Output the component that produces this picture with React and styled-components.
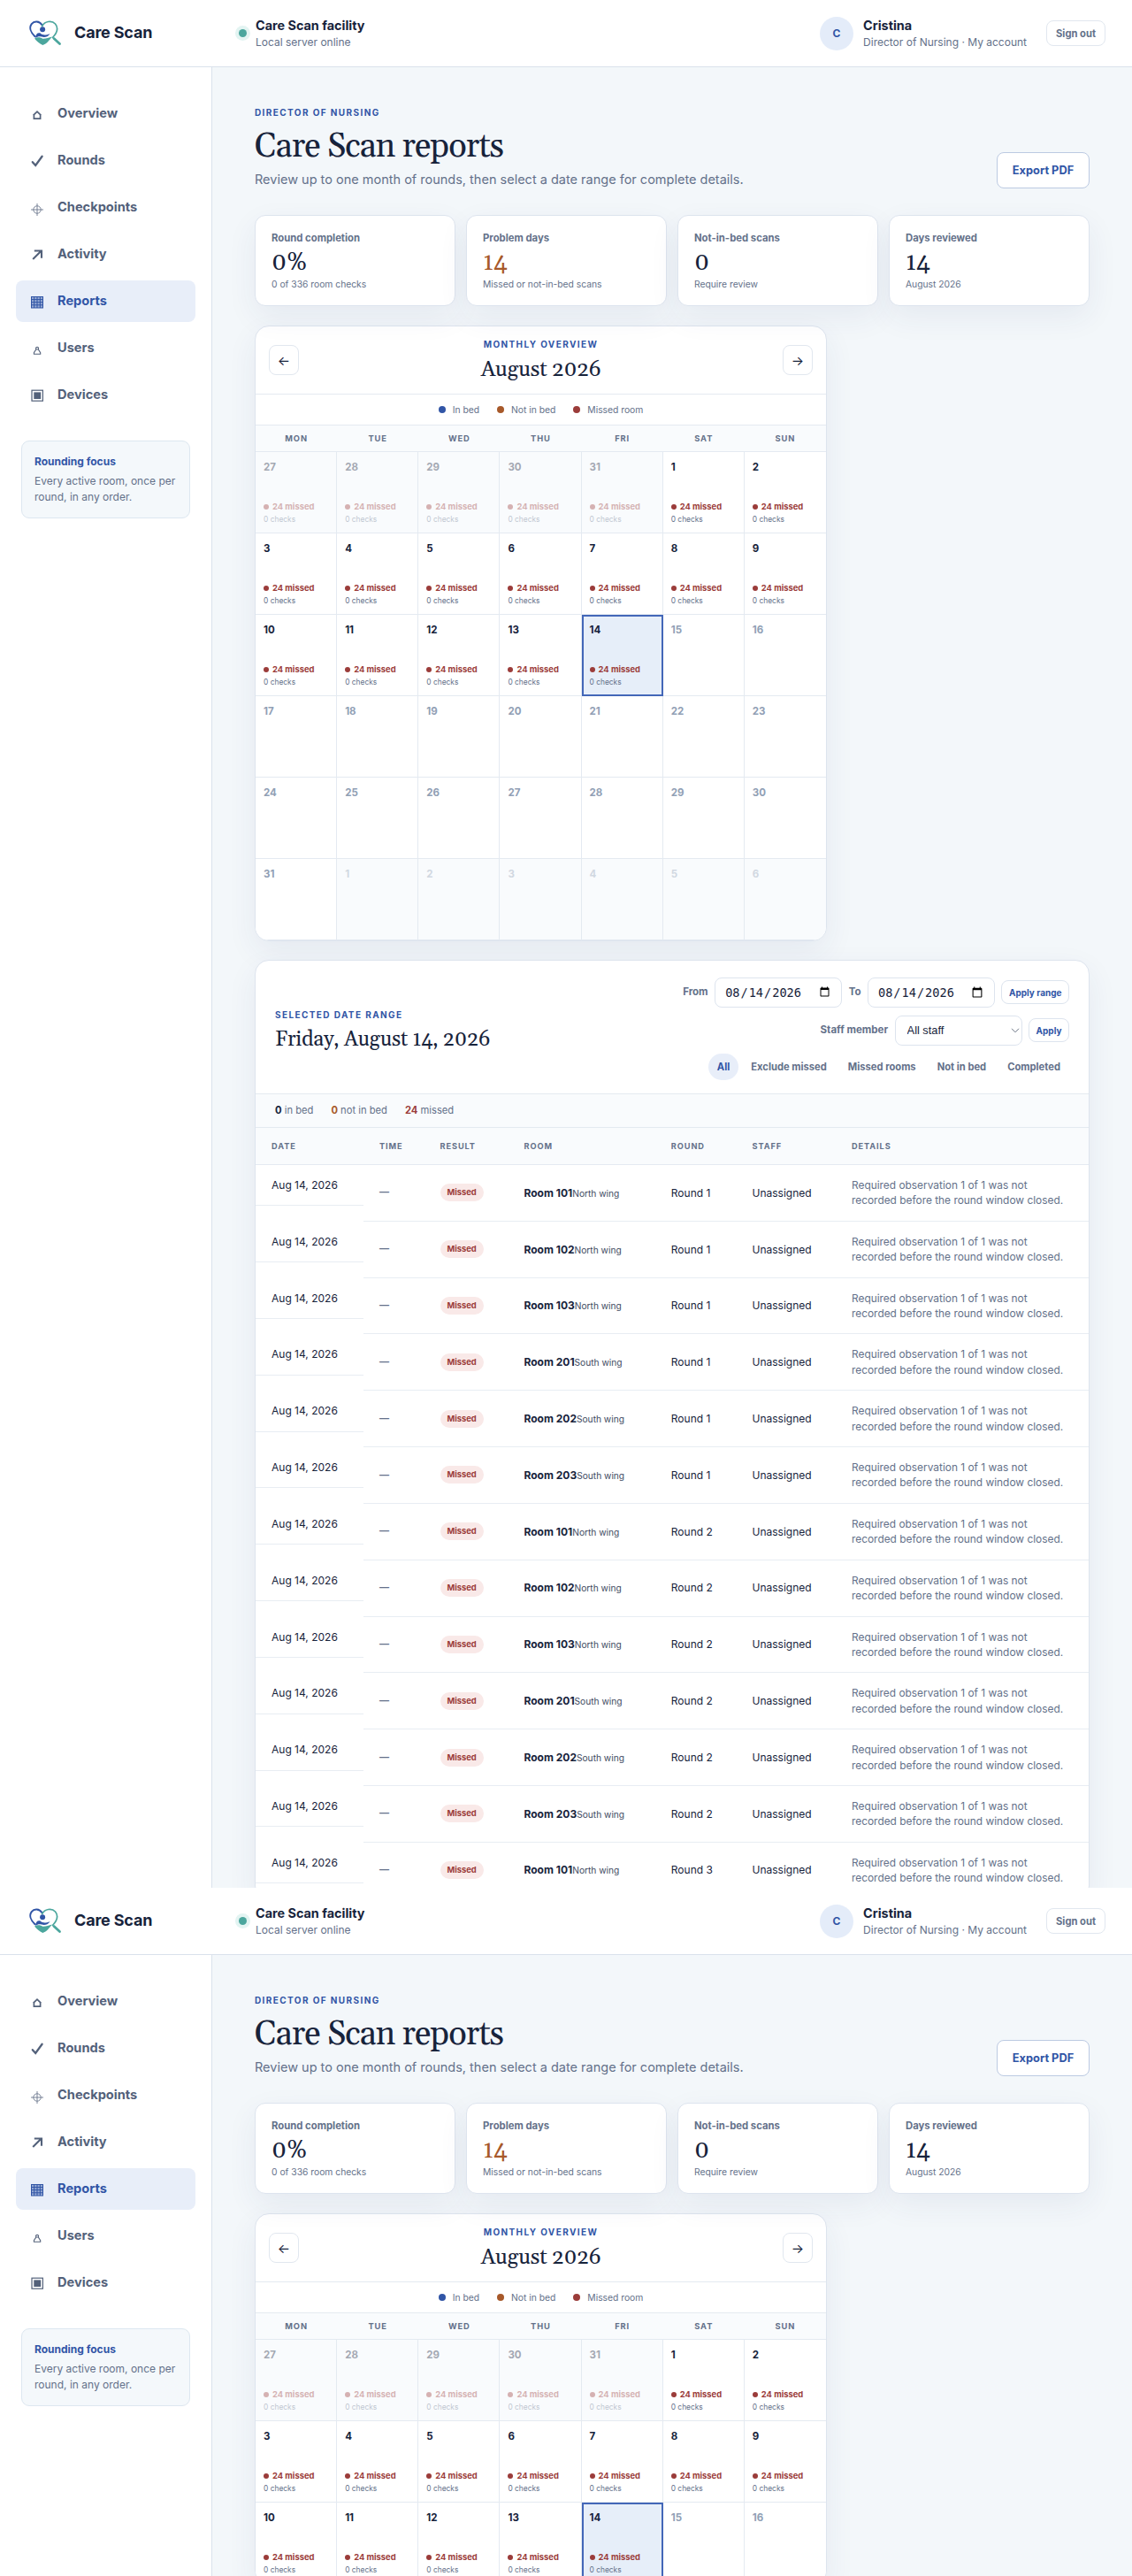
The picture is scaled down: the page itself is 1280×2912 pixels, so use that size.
import React from 'react';
import styled, { createGlobalStyle, css } from 'styled-components';

const GlobalStyle = createGlobalStyle`
  * {
    box-sizing: border-box;
  }

  body {
    margin: 0;
    background: #f3f7fa;
    color: #17233b;
    font-family: Inter, 'Liberation Sans', sans-serif;
    font-size: 12px;
    line-height: 1.45;
  }

  h1, h2, p {
    margin: 0;
  }

  button {
    font-family: inherit;
  }
`;

const serif = css`
  font-family: Georgia, Gelasio, 'Liberation Serif', serif;
  font-variant-numeric: oldstyle-nums;
  font-weight: 400;
`;

const Screen = styled.div`
  display: flex;
  flex-direction: column;
  height: ${props => props.$height}px;
  overflow: hidden;
`;

const Header = styled.header`
  display: flex;
  flex: none;
  align-items: center;
  height: 76px;
  padding: 0 30px 0 33px;
  border-bottom: 1px solid #dae2ec;
  background: #fff;
`;

const Brand = styled.div`
  display: flex;
  align-items: center;
  gap: 14px;
  width: 236px;
  font-size: 18px;
  font-weight: 700;
  letter-spacing: -0.01em;
`;

const Facility = styled.div`
  display: flex;
  flex: 1;
  align-items: center;
  gap: 10px;
`;

const StatusDot = styled.span`
  width: 9px;
  height: 9px;
  margin-left: 1px;
  border-radius: 50%;
  background: #4ba69d;
  box-shadow: 0 0 0 4px #e3f4f2;
`;

const TitleStack = styled.div`
  display: flex;
  flex-direction: column;
  line-height: 19px;

  strong {
    font-size: 14.4px;
    font-weight: 700;
  }

  span {
    color: #64718a;
    font-size: 12px;
  }
`;

const Account = styled.div`
  display: flex;
  align-items: center;
  gap: 11px;
  margin-right: 22px;
`;

const Avatar = styled.span`
  display: grid;
  place-items: center;
  width: 38px;
  height: 38px;
  border-radius: 50%;
  background: #e4ecf9;
  color: #3155a6;
  font-size: 12px;
  font-weight: 700;
`;

const SignOut = styled.button`
  height: 29px;
  padding: 0 10px;
  border: 1px solid #e1e7ef;
  border-radius: 8px;
  background: #fff;
  color: #64718a;
  font-size: 11.2px;
  font-weight: 700;
`;

const Body = styled.div`
  display: flex;
  flex: 1;
  min-height: 0;
`;

const Sidebar = styled.aside`
  flex: none;
  width: 240px;
  padding: 29px 18px 0;
  border-right: 1px solid #dae2ec;
  background: #fff;
`;

const Nav = styled.nav`
  display: flex;
  flex-direction: column;
  gap: 6px;
`;

const NavItem = styled.a`
  display: flex;
  align-items: center;
  gap: 13px;
  height: 47px;
  padding: 0 14px;
  border-radius: 8px;
  background: ${props => (props.$active ? '#e8eef9' : 'transparent')};
  color: ${props => (props.$active ? '#3155a6' : '#53617a')};
  font-size: 14.6px;
  font-weight: 650;
`;

const NavIcon = styled.svg`
  flex: none;
  width: 20px;
  height: 20px;
  fill: none;
  stroke: currentColor;
`;

const FocusNote = styled.div`
  height: 88px;
  margin: 28px 6px 0;
  padding: 14px;
  border: 1px solid #dde7f0;
  border-radius: 9px;
  background: #f4f8fb;
  color: #64718a;
  font-size: 12px;
  line-height: 18px;

  strong {
    display: block;
    margin-bottom: 4px;
    color: #3155a6;
    font-weight: 700;
  }
`;

const Main = styled.main`
  flex: 1;
  padding: 44px 48px 0;
  background: #f3f7fa;
`;

const PageHead = styled.div`
  display: flex;
  align-items: flex-end;
  justify-content: space-between;
  height: 93px;
  margin-bottom: 30px;
`;

const Eyebrow = styled.p`
  color: #3155a6;
  font-size: 10px;
  font-weight: 750;
  letter-spacing: 0.14em;
  line-height: 15px;
  text-transform: uppercase;
`;

const PageTitle = styled.h1`
  ${serif}
  margin: 10px 0 6px;
  font-size: 38px;
  letter-spacing: -0.025em;
  line-height: 42px;
`;

const Lead = styled.p`
  color: #64718a;
  font-size: 14.5px;
  line-height: 20px;
`;

const ExportButton = styled.button`
  width: 105px;
  height: 41px;
  border: 1px solid #bccae2;
  border-radius: 8px;
  background: #fff;
  color: #3155a6;
  font-size: 12.8px;
  font-weight: 700;
`;

const panel = css`
  border: 1px solid #dde4ee;
  background: #fff;
  box-shadow: 0 12px 34px rgba(36, 61, 112, 0.07);
`;

const Stats = styled.section`
  display: grid;
  grid-template-columns: repeat(4, 1fr);
  gap: 12px;
  margin-bottom: 22px;
`;

const StatCard = styled.article`
  ${panel}
  display: flex;
  flex-direction: column;
  height: 103px;
  padding: 17px 18px;
  border-radius: 12px;
  color: #64718a;
  font-size: 10.3px;
  line-height: 15px;
`;

const StatLabel = styled.span`
  font-size: 11.3px;
  font-weight: 650;
  line-height: 16px;
`;

const StatValue = styled.strong`
  ${serif}
  margin: 5px 0 1px;
  color: ${props => (props.$warn ? '#a7592a' : '#17233b')};
  font-size: 28px;
  line-height: 31px;
`;

const Calendar = styled.section`
  ${panel}
  width: 647px;
  margin-bottom: 21px;
  border-radius: 16px;
  overflow: hidden;
`;

const CalendarHead = styled.div`
  display: flex;
  align-items: center;
  justify-content: space-between;
  height: 77px;
  padding: 0 15px;
  border-bottom: 1px solid #e4eaf1;
  text-align: center;
`;

const PanelTitle = styled.h2`
  ${serif}
  margin-top: 6px;
  font-size: ${props => props.$size}px;
  letter-spacing: -0.01em;
  line-height: 29px;
`;

const ArrowButton = styled.button`
  width: 34px;
  height: 34px;
  padding: 0;
  border: 1px solid #e1e7ef;
  border-radius: 8px;
  background: #fff;
  color: #17233b;
  font-size: 15px;
`;

const Legend = styled.div`
  display: flex;
  align-items: center;
  justify-content: center;
  gap: 20px;
  height: 35px;
  border-bottom: 1px solid #e4eaf1;
  color: #64718a;
  font-size: 10.3px;
`;

const LegendItem = styled.span`
  display: flex;
  align-items: center;
  gap: 8px;

  &::before {
    content: '';
    width: 8px;
    height: 8px;
    border-radius: 50%;
    background: ${props => props.$color};
  }
`;

const Weekdays = styled.div`
  display: grid;
  grid-template-columns: repeat(7, 1fr);
  align-items: center;
  height: 30px;
  border-bottom: 1px solid #e4eaf1;
  background: #f9fbfd;
  color: #64718a;
  font-size: 9.3px;
  font-weight: 700;
  letter-spacing: 0.1em;
  text-align: center;
`;

const DayGrid = styled.div`
  display: grid;
  grid-template-columns: repeat(7, 1fr);
`;

const Day = styled.div`
  display: flex;
  flex-direction: column;
  height: 92px;
  padding: 9px 9px 0;
  border-right: 1px solid #e4eaf1;
  border-bottom: 1px solid #e4eaf1;
  background: ${props => (props.$outside ? '#f9fbfd' : '#fff')};
  color: ${props => (props.$checked ? '#17233b' : '#91a0b5')};

  &:nth-child(7n) {
    border-right: 0;
  }

  > * {
    opacity: ${props => (props.$outside ? 0.38 : 1)};
  }

  ${props =>
    props.$selected &&
    css`
      background: #e6eef9;
      outline: 2px solid #4367b8;
      outline-offset: -2px;
    `}
`;

const DayNumber = styled.span`
  height: 16px;
  margin-bottom: 30px;
  font-size: 11.5px;
  font-weight: 750;
  line-height: 16px;
`;

const DayMissed = styled.span`
  display: flex;
  align-items: center;
  gap: 4px;
  height: 14px;
  color: #9b3c3a;
  font-size: 9.4px;
  font-weight: 700;

  &::before {
    content: '';
    width: 6px;
    height: 6px;
    border-radius: 50%;
    background: currentColor;
  }
`;

const DayChecks = styled.span`
  margin-top: 1px;
  color: #64718a;
  font-size: 8.4px;
  line-height: 13px;
`;

const Details = styled.section`
  ${panel}
  border-radius: 16px;
  overflow: hidden;
`;

const DetailsHead = styled.div`
  display: flex;
  align-items: center;
  justify-content: space-between;
  height: 151px;
  padding: 18px 22px 15px;
  border-bottom: 1px solid #e4eaf1;
`;

const RangeTitle = styled.div`
  padding-top: 5px;
`;

const Filters = styled.div`
  display: flex;
  flex-direction: column;
  align-items: flex-end;
  gap: 9px;
`;

const FilterRow = styled.div`
  display: flex;
  align-items: center;
  gap: ${props => props.$gap || 7.5}px;
`;

const FieldLabel = styled.label`
  color: #64718a;
  font-size: 11.5px;
  font-weight: 650;
`;

const field = css`
  width: 144px;
  height: 34px;
  padding: 0 10px;
  border: 1px solid #dde4ee;
  border-radius: 8px;
  background: #fff;
  color: #17233b;
`;

const DateInput = styled.input`
  ${field}
  font-size: 13.6px;
`;

const SelectBox = styled.span`
  position: relative;
  display: flex;

  svg {
    position: absolute;
    top: 14px;
    right: 3px;
    pointer-events: none;
  }
`;

const StaffSelect = styled.select`
  ${field}
  padding-left: 13px;
  appearance: none;
  font-family: 'Liberation Sans', Arial, sans-serif;
  font-size: 12.800px;
`;

const ApplyButton = styled.button`
  height: 27px;
  padding: 0 7.5px;
  border: 1px solid #dde4ee;
  border-radius: 8px;
  background: #fff;
  color: #3155a6;
  font-size: 10px;
  font-weight: 700;
`;

const Chip = styled.button`
  height: 30px;
  padding: 0 10px;
  border: 0;
  border-radius: 999px;
  background: ${props => (props.$active ? '#e8eef9' : 'transparent')};
  color: ${props => (props.$active ? '#3155a6' : '#64718a')};
  font-size: 11.2px;
  font-weight: 650;
`;

const Summary = styled.div`
  display: flex;
  align-items: center;
  gap: 20px;
  height: 38px;
  padding: 0 22px;
  border-bottom: 1px solid #e4eaf1;
  background: #f9fbfd;
  color: #64718a;
  font-size: 11.2px;
`;

const Count = styled.strong`
  color: ${props => props.$color || '#17233b'};
`;

const Table = styled.table`
  width: 100%;
  border-collapse: separate;
  border-spacing: 0;
  table-layout: fixed;
`;

const Th = styled.th`
  width: ${props => props.$width};
  height: 42px;
  padding: 0 18px;
  border-bottom: 1px solid #e4eaf1;
  background: #f9fbfd;
  color: #64718a;
  font-size: 9.2px;
  font-weight: 700;
  letter-spacing: 0.1em;
  text-align: left;
  text-transform: uppercase;
`;

const Td = styled.td`
  padding: 14px 18px;
  border-bottom: 1px solid #e8edf3;
  font-size: 12px;
  white-space: nowrap;
  vertical-align: middle;
`;

const TimeTd = styled(Td)`
  color: #64718a;
  font-size: 11px;
  font-weight: 700;
`;

const NoteTd = styled(Td)`
  padding-right: 26px;
  color: #64718a;
  font-size: 11.9px;
  line-height: 17.4px;
  white-space: normal;
`;

const DateTd = styled.td`
  padding: 0;
  vertical-align: top;
`;

const DateText = styled.div`
  padding: 14px 18px;
  border-bottom: 1px solid #e8edf3;
`;

const Wing = styled.span`
  color: #3e4a61;
  font-size: 10.2px;
`;

const Badge = styled.span`
  display: inline-block;
  padding: 0 8px;
  border-radius: 999px;
  background: #f9e9e8;
  color: #9b3c3a;
  font-size: 9.4px;
  font-weight: 700;
  line-height: 20px;
  vertical-align: middle;
`;

const NAV = [
  {
    label: 'Overview',
    icon: <path d="M5.6 11.400 10 7.200l4.400 4.200M6.400 10.500V15.200h7.200V10.500" strokeWidth="1.700" />,
  },
  {
    label: 'Rounds',
    icon: <path d="M4.800 11.200 8.200 15 15.600 4.800" strokeWidth="2.300" strokeLinecap="round" />,
  },
  {
    label: 'Checkpoints',
    icon: (
      <g strokeWidth="0.900" opacity="0.850">
        <circle cx="10" cy="12" r="4.200" />
        <path d="M10 5v14M3 12h14" />
      </g>
    ),
  },
  {
    label: 'Activity',
    icon: <path d="M5.200 15 14.500 5.700M6.800 5.500h8.200v8.200" strokeWidth="2.100" />,
  },
  {
    label: 'Reports',
    icon: (
      <g strokeWidth="1">
        <rect x="3.500" y="4.500" width="13" height="12.500" fill="currentColor" fillOpacity="0.450" />
        <path d="M6.700 4.500v12.500M10 4.500v12.500M13.300 4.500v12.500M3.500 7.600h13M3.500 10.700h13M3.500 13.800h13" />
      </g>
    ),
  },
  {
    label: 'Users',
    icon: (
      <path
        d="M6.400 16.300h7.300v-1.600l-2.500-3.900a1.500 1.500 0 1 0-2.300 0l-2.500 3.900zM8.200 11h3.600"
        strokeWidth="1.100"
      />
    ),
  },
  {
    label: 'Devices',
    icon: (
      <>
        <rect x="4" y="4.200" width="12.400" height="12" strokeWidth="1.200" />
        <rect x="6.300" y="6.400" width="7.900" height="7.600" fill="currentColor" stroke="none" />
      </>
    ),
  },
];

const STATS = [
  { label: 'Round completion', value: '0%', note: '0 of 336 room checks' },
  {
    label: 'Problem days',
    value: '14',
    note: 'Missed or not-in-bed scans',
    warn: true,
  },
  { label: 'Not-in-bed scans', value: '0', note: 'Require review' },
  { label: 'Days reviewed', value: '14', note: 'August 2026' },
];

const WEEKDAYS = ['MON', 'TUE', 'WED', 'THU', 'FRI', 'SAT', 'SUN'];

// The grid opens on Monday 27 July and closes on Sunday 6 September.
const DAYS = Array.from({ length: 42 }, (_, index) => {
  const date = new Date(2026, 6, 27 + index);
  return {
    key: index,
    number: date.getDate(),
    outside: date.getMonth() !== 7,
    checked: index < 19,
    selected: index === 18,
  };
});

const COLUMNS = [
  ['Date', '122px'],
  ['Time', '68.5px'],
  ['Result', '95px'],
  ['Room', '166.3px'],
  ['Round', '91.7px'],
  ['Staff', '112.5px'],
  ['Details', 'auto'],
];

const ROOMS = [101, 102, 103, 201, 202, 203];

const ROWS = Array.from({ length: 13 }, (_, index) => {
  const room = ROOMS[index % 6];
  return {
    key: index,
    room,
    wing: room < 200 ? 'North wing' : 'South wing',
    round: Math.floor(index / 6) + 1,
  };
});

function Logo() {
  return (
    <svg width="37" height="29" viewBox="0 0 37 29" fill="none">
      <path
        d="M14.600 5.200C11.400.5 5.600.5 2.700 4.100C-.2 8 1.500 13.500 6.500 18.200"
        stroke="#3155a6"
        strokeWidth="2"
        strokeLinecap="round"
      />
      <path
        d="M14.600 6.600C17.500.8 25.500-.4 29.500 4C33.700 9 30.700 15 26.500 19.500"
        stroke="#4ba69d"
        strokeWidth="1.700"
        strokeLinecap="round"
      />
      <path
        d="M28 20.500L34.500 26.500"
        stroke="#4ba69d"
        strokeWidth="2.800"
        strokeLinecap="round"
      />
      <circle cx="15.100" cy="10.300" r="3" fill="#3155a6" />
      <path
        d="M7 20C7.200 15.500 9.800 13.500 12.600 14.600C15.500 17.200 18.500 17 23.500 15.200C21 18.800 17.500 19.600 14 18.600C11.500 18 9 18.500 7 20Z"
        fill="#3155a6"
      />
      <path
        d="M6 20.600C9.500 18.600 13 19.200 15 20.700C19 20.900 22 19.700 26 18.500C22.500 22.500 20 26.500 15.300 28C11.500 26.500 8.500 23.500 6 20.600Z"
        fill="#4ba69d"
      />
    </svg>
  );
}

function TopBar() {
  return (
    <Header>
      <Brand>
        <Logo />
        Care Scan
      </Brand>
      <Facility>
        <StatusDot />
        <TitleStack>
          <strong>Care Scan facility</strong>
          <span>Local server online</span>
        </TitleStack>
      </Facility>
      <Account>
        <Avatar>C</Avatar>
        <TitleStack>
          <strong>Cristina</strong>
          <span>Director of Nursing · My account</span>
        </TitleStack>
      </Account>
      <SignOut>Sign out</SignOut>
    </Header>
  );
}

function SideNav() {
  return (
    <Sidebar>
      <Nav>
        {NAV.map(({ icon, label }) => (
          <NavItem key={label} $active={label === 'Reports'}>
            <NavIcon viewBox="0 0 20 20">{icon}</NavIcon>
            {label}
          </NavItem>
        ))}
      </Nav>
      <FocusNote>
        <strong>Rounding focus</strong>
        Every active room, once per round, in any order.
      </FocusNote>
    </Sidebar>
  );
}

function MonthCalendar({ weeks }) {
  return (
    <Calendar>
      <CalendarHead>
        <ArrowButton>←</ArrowButton>
        <div>
          <Eyebrow>Monthly overview</Eyebrow>
          <PanelTitle $size={24.5}>August 2026</PanelTitle>
        </div>
        <ArrowButton>→</ArrowButton>
      </CalendarHead>
      <Legend>
        <LegendItem $color="#3155a6">In bed</LegendItem>
        <LegendItem $color="#a7592a">Not in bed</LegendItem>
        <LegendItem $color="#9b3c3a">Missed room</LegendItem>
      </Legend>
      <Weekdays>
        {WEEKDAYS.map(day => (
          <span key={day}>{day}</span>
        ))}
      </Weekdays>
      <DayGrid>
        {DAYS.slice(0, weeks * 7).map(day => (
          <Day
            key={day.key}
            $outside={day.outside}
            $checked={day.checked}
            $selected={day.selected}
          >
            <DayNumber>{day.number}</DayNumber>
            {day.checked && (
              <>
                <DayMissed>24 missed</DayMissed>
                <DayChecks>0 checks</DayChecks>
              </>
            )}
          </Day>
        ))}
      </DayGrid>
    </Calendar>
  );
}

function RangeDetails() {
  return (
    <Details>
      <DetailsHead>
        <RangeTitle>
          <Eyebrow>Selected date range</Eyebrow>
          <PanelTitle $size={23.6}>Friday, August 14, 2026</PanelTitle>
        </RangeTitle>
        <Filters>
          <FilterRow>
            <FieldLabel>From</FieldLabel>
            <DateInput type="date" defaultValue="2026-08-14" />
            <FieldLabel>To</FieldLabel>
            <DateInput type="date" defaultValue="2026-08-14" />
            <ApplyButton>Apply range</ApplyButton>
          </FilterRow>
          <FilterRow>
            <FieldLabel>Staff member</FieldLabel>
            <SelectBox>
              <StaffSelect defaultValue="all">
                <option value="all">All staff</option>
              </StaffSelect>
              <svg width="10" height="6" viewBox="0 0 10 6" fill="none">
                <path d="M1 0.800 5 4.800 9 0.800" stroke="#6b7585" />
              </svg>
            </SelectBox>
            <ApplyButton>Apply</ApplyButton>
          </FilterRow>
          <FilterRow $gap={4}>
            <Chip $active>All</Chip>
            <Chip>Exclude missed</Chip>
            <Chip>Missed rooms</Chip>
            <Chip>Not in bed</Chip>
            <Chip>Completed</Chip>
          </FilterRow>
        </Filters>
      </DetailsHead>
      <Summary>
        <span>
          <Count>0</Count> in bed
        </span>
        <span>
          <Count $color="#a7592a">0</Count> not in bed
        </span>
        <span>
          <Count $color="#9b3c3a">24</Count> missed
        </span>
      </Summary>
      <Table>
        <thead>
          <tr>
            {COLUMNS.map(([name, width]) => (
              <Th key={name} $width={width}>
                {name}
              </Th>
            ))}
          </tr>
        </thead>
        <tbody>
          {ROWS.map(row => (
            <tr key={row.key}>
              <DateTd>
                <DateText>Aug 14, 2026</DateText>
              </DateTd>
              <TimeTd>—</TimeTd>
              <Td>
                <Badge>Missed</Badge>
              </Td>
              <Td>
                <strong>Room {row.room}</strong>
                <Wing>{row.wing}</Wing>
              </Td>
              <Td>Round {row.round}</Td>
              <Td>Unassigned</Td>
              <NoteTd>
                Required observation 1 of 1 was not recorded before the round
                window closed.
              </NoteTd>
            </tr>
          ))}
        </tbody>
      </Table>
    </Details>
  );
}

function ReportsScreen({ height, weeks, details }) {
  return (
    <Screen $height={height}>
      <TopBar />
      <Body>
        <SideNav />
        <Main>
          <PageHead>
            <div>
              <Eyebrow>Director of Nursing</Eyebrow>
              <PageTitle>Care Scan reports</PageTitle>
              <Lead>
                Review up to one month of rounds, then select a date range for
                complete details.
              </Lead>
            </div>
            <ExportButton>Export PDF</ExportButton>
          </PageHead>
          <Stats>
            {STATS.map(stat => (
              <StatCard key={stat.label}>
                <StatLabel>{stat.label}</StatLabel>
                <StatValue $warn={stat.warn}>{stat.value}</StatValue>
                {stat.note}
              </StatCard>
            ))}
          </Stats>
          <MonthCalendar weeks={weeks} />
          {details && <RangeDetails />}
        </Main>
      </Body>
    </Screen>
  );
}

function App() {
  return (
    <>
      <GlobalStyle />
      <ReportsScreen height={2134} weeks={6} details />
      <ReportsScreen height={778} weeks={3} />
    </>
  );
}

export default App;
